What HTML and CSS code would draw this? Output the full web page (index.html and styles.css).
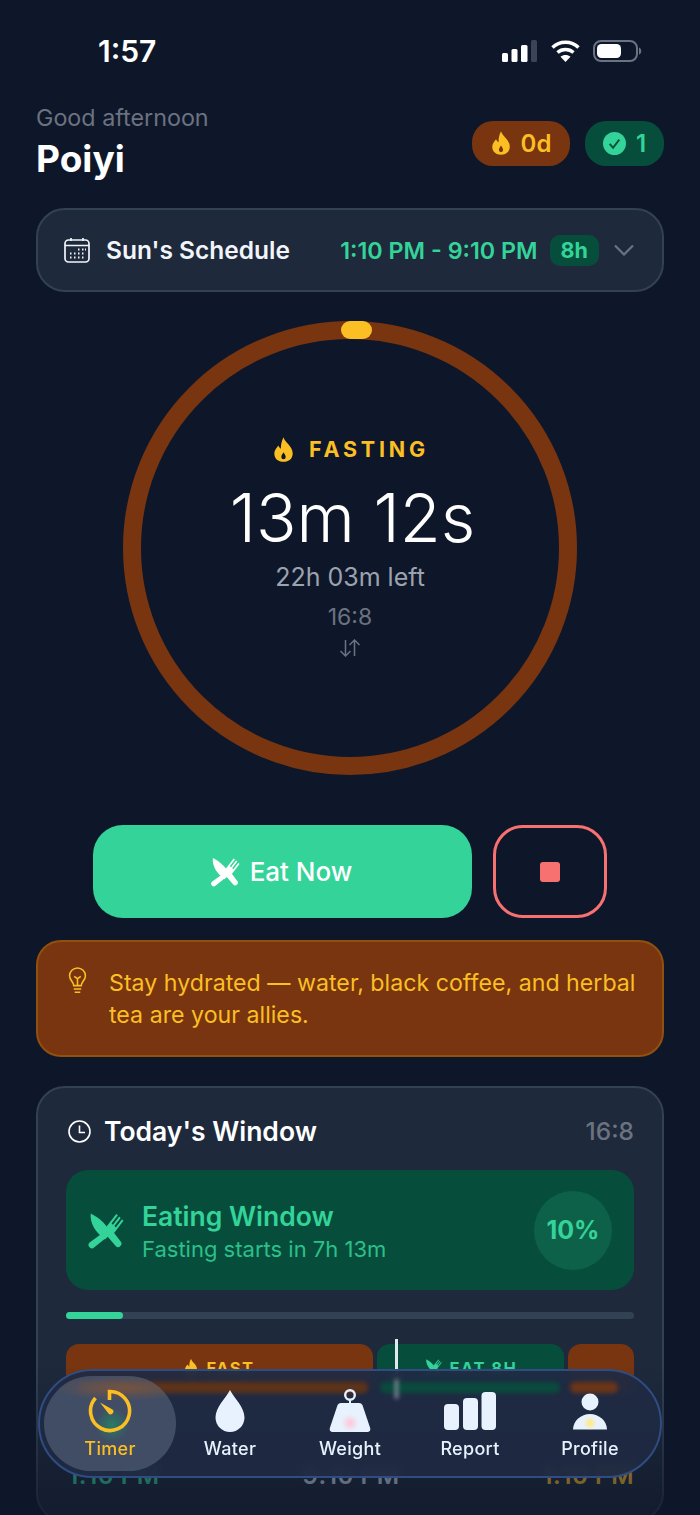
FILE: index.html
```html
<!DOCTYPE html>
<html>
    <head>
        <meta charset="utf-8">
        <title>Timer</title>
        <link rel="stylesheet" href="styles.css">
    </head>
    <body>
        <svg class="defs" width="0" height="0">
            <defs>
                <radialGradient id="glow-pink">
                    <stop offset="0" stop-color="#ffc6d8"/>
                    <stop offset="1" stop-color="#ffc6d8" stop-opacity="0"/>
                </radialGradient>
                <radialGradient id="glow-yellow">
                    <stop offset="0.2" stop-color="#fdeb8f"/>
                    <stop offset="1" stop-color="#fdeb8f" stop-opacity="0"/>
                </radialGradient>
                <path id="flame" fill-rule="evenodd" d="M12 1C13.500 7 22.500 11 22.500 19.500 22.500 25.500 18 29 12 29 6 29 1.500 25.500 1.500 19.500 1.500 15.500 4.500 13 6 10.500 7 12.500 8 13.500 9 14 9 9 10 5 12 1ZM12 18C10.500 20.500 9.500 21.500 9.500 23.500A2.500 2.500 0 0 0 14.500 23.500C14.500 21.500 13.500 20.500 12 18Z"/>
                <g id="cutlery">
                    <path d="M4 2C12 6 18 12 21 19L16 24C8 18 3 10 4 2Z"/>
                    <path d="M16.500 19.500 21 15 29 25.500A2.600 2.600 0 0 1 25 29.500Z"/>
                    <path d="M13.500 19 17 22.500 7 30.500A2.600 2.600 0 0 1 3 26.500Z"/>
                    <path d="M17 13.500 25.500 2.500 26.800 3.600 21.500 10.500 22.700 11.600 28 4.700 29.200 5.800 23.900 12.700 25.100 13.800 30.400 7 31.500 8.200 24 18C22 19.800 20 19.800 18.500 18.500 17 17.200 16.500 15.500 17 13.500Z"/>
                </g>
            </defs>
        </svg>

        <div class="screen">
            <div class="status">
                <span class="clock">1:57</span>
                <div class="status-icons">
                    <svg width="35" height="22" viewBox="0 0 35 22">
                        <rect x="0" y="13" width="6" height="9" rx="1.500" fill="#fff"/>
                        <rect x="9.500" y="9" width="6" height="13" rx="1.500" fill="#fff"/>
                        <rect x="19" y="5" width="6.500" height="17" rx="1.500" fill="#fff"/>
                        <rect x="29" y="0" width="6" height="22" rx="1.500" fill="#3b4557"/>
                    </svg>
                    <svg width="29" height="22" viewBox="0 0 29 22" fill="none" stroke="#fff" stroke-width="3.400">
                        <path d="M1.500 7.500C8.500 0.500 20.500 0.500 27.500 7.500"/>
                        <path d="M6.500 12.500C11 8.500 18 8.500 22.500 12.500"/>
                        <path d="M14.500 22 9.500 16.800C12.500 14.500 16.500 14.500 19.500 16.800Z" fill="#fff" stroke="none"/>
                    </svg>
                    <svg width="49" height="22" viewBox="0 0 49 22">
                        <rect x="1" y="1" width="43" height="20" rx="7" fill="none" stroke="#6b7280" stroke-width="2"/>
                        <rect x="4" y="4" width="24" height="14" rx="4.500" fill="#fff"/>
                        <path d="M46 7.500C49 8.500 49 13.500 46 14.500Z" fill="#6b7280"/>
                    </svg>
                </div>
            </div>

            <div class="header">
                <div>
                    <div class="greeting">Good afternoon</div>
                    <div class="name">Poiyi</div>
                </div>
                <div class="pills">
                    <div class="pill pill-fast">
                        <svg width="20" height="26" viewBox="0 0 24 30" fill="#fbbf24"><use href="#flame"/></svg>
                        0d
                    </div>
                    <div class="pill pill-done">
                        <svg width="23" height="23" viewBox="0 0 24 24">
                            <circle cx="12" cy="12" r="12" fill="#34d399"/>
                            <path d="M7 12.500 10.500 16.500 17 8" fill="none" stroke="#064e3b" stroke-width="2"/>
                        </svg>
                        1
                    </div>
                </div>
            </div>

            <div class="schedule">
                <svg width="26" height="26" viewBox="0 0 26 26" fill="none" stroke="#f1f5f9" stroke-width="1.700">
                    <rect x="1" y="3" width="24" height="22" rx="3.500"/>
                    <path d="M1 8.500H25M7 1V4M19 1V4"/>
                    <path d="M14 12.500h1.500M18 12.500h1.500M21 12.500h1M6 16.500h1.500M10 16.500h1.500M14 16.500h1.500M18 16.500h1.500M6 20.500h1.500M10 20.500h1.500M14 20.500h1.500M18 20.500h1.500" stroke-width="2"/>
                </svg>
                <span class="schedule-name">Sun's Schedule</span>
                <span class="schedule-time">1:10 PM - 9:10 PM</span>
                <span class="schedule-chip">8h</span>
                <svg class="chevron" width="22" height="12" viewBox="0 0 22 12" fill="none" stroke="#6b7280" stroke-width="2.200"><path d="M2 1.500 11 10.500 20 1.500"/></svg>
            </div>

            <div class="ring">
                <svg width="454" height="454" viewBox="0 0 454 454">
                    <circle cx="227" cy="227" r="218" fill="none" stroke="#78350f" stroke-width="18"/>
                    <rect x="218" y="0" width="31" height="18" rx="9" fill="#fbbf24"/>
                </svg>
                <div class="ring-text">
                    <div class="phase">
                        <svg width="21" height="27" viewBox="0 0 24 30" fill="#fbbf24"><use href="#flame"/></svg>
                        <span>FASTING</span>
                    </div>
                    <div class="elapsed">13m 12s</div>
                    <div class="left">22h 03m left</div>
                    <div class="ratio">16:8</div>
                    <svg class="swap" width="22" height="18" viewBox="0 0 22 18" fill="none" stroke="#6b7280" stroke-width="1.500">
                        <path d="M6.500 1V17M1.500 12 6.500 17 11.500 12M15.500 17V1M10.500 6 15.500 1 20.500 6"/>
                    </svg>
                </div>
            </div>

            <div class="actions">
                <div class="eat-btn">
                    <svg width="31" height="31" viewBox="0 0 32 32" fill="#fff"><use href="#cutlery"/></svg>
                    Eat Now
                </div>
                <div class="stop-btn"><div class="stop-square"></div></div>
            </div>

            <div class="tip">
                <svg width="19" height="28" viewBox="0 0 20 30" fill="none" stroke="#fbbf24" stroke-width="1.700">
                    <path d="M6 20C6 16 1.500 14.500 1.500 9.500A8.500 8.500 0 0 1 18.500 9.500C18.500 14.500 14 16 14 20Z"/>
                    <path d="M6.500 10 10 12.500 13.500 10M10 12.500V20M6 23.500H14M7 27H13"/>
                </svg>
                <p>Stay hydrated — water, black coffee, and herbal tea are your allies.</p>
            </div>

            <div class="card">
                <div class="card-head">
                    <svg width="23" height="23" viewBox="0 0 23 23" fill="none" stroke="#fff" stroke-width="1.600">
                        <circle cx="11.500" cy="11.500" r="10.500"/>
                        <path d="M11.500 5.500V12.500H17"/>
                    </svg>
                    <span class="card-title">Today's Window</span>
                    <span class="card-ratio">16:8</span>
                </div>

                <div class="window">
                    <svg width="38" height="38" viewBox="0 0 32 32" fill="#34d399"><use href="#cutlery"/></svg>
                    <div class="window-text">
                        <div class="window-title">Eating Window</div>
                        <div class="window-sub">Fasting starts in 7h 13m</div>
                    </div>
                    <div class="window-pct">10%</div>
                </div>

                <div class="progress"><div class="progress-fill" style="width: 10%"></div></div>

                <div class="timeline">
                    <div class="seg seg-fast seg-a">
                        <svg width="14" height="18" viewBox="0 0 24 30" fill="#fbbf24"><use href="#flame"/></svg>
                        FAST
                    </div>
                    <div class="seg seg-eat seg-b">
                        <svg width="18" height="18" viewBox="0 0 32 32" fill="#34d399"><use href="#cutlery"/></svg>
                        EAT 8H
                    </div>
                    <div class="seg seg-fast seg-c"></div>
                    <div class="now-mark"></div>
                </div>

                <div class="times">
                    <div class="time-val time-green">1:10 PM</div>
                    <div class="time-val time-gray">9:10 PM</div>
                    <div class="time-val time-amber">1:10 PM</div>
                </div>
            </div>

            <div class="fade"></div>

            <div class="nav">
                <div class="smear smear-a"></div>
                <div class="smear smear-b"></div>
                <div class="smear smear-c"></div>
                <div class="smear smear-mark"></div>
                <div class="nav-item nav-active">
                    <div class="nav-icon">
                        <svg width="46" height="46" viewBox="0 0 46 46" fill="none" stroke="#fbbf24" stroke-width="3.600">
                            <path d="M22.500 12V3.500A19.500 19.500 0 1 1 8.500 10"/>
                            <path d="M13 14.500 25.500 21.500A2.800 2.800 0 0 1 21.500 25.500Z" fill="#fbbf24" stroke="none"/>
                        </svg>
                    </div>
                    <span>Timer</span>
                </div>
                <div class="nav-item">
                    <div class="nav-icon">
                        <svg width="30" height="42" viewBox="0 0 30 42" fill="#e8f2ff">
                            <path d="M15 0C19 8 29.500 17 29.500 27.500A14.500 14.500 0 0 1 0.500 27.500C0.500 17 11 8 15 0Z"/>
                        </svg>
                    </div>
                    <span>Water</span>
                </div>
                <div class="nav-item">
                    <div class="nav-icon">
                        <svg width="44" height="44" viewBox="0 0 44 44" fill="#e8f2ff">
                            <circle cx="22" cy="6" r="4.800" fill="none" stroke="#e8f2ff" stroke-width="2.400"/>
                            <path d="M21 10H23V15H21Z"/>
                            <path d="M13 14H31C33 14 34 15 34.600 16.500L42 38.500C43 41.500 41.500 43 39 43H5C2.500 43 1 41.500 2 38.500L9.400 16.500C10 15 11 14 13 14Z"/>
                            <circle cx="22" cy="34" r="9" fill="url(#glow-pink)"/>
                        </svg>
                    </div>
                    <span>Weight</span>
                </div>
                <div class="nav-item">
                    <div class="nav-icon">
                        <svg width="52" height="38" viewBox="0 0 52 38" fill="#e8f2ff">
                            <rect x="0" y="12" width="15" height="26" rx="4"/>
                            <rect x="19" y="6" width="15" height="32" rx="4"/>
                            <rect x="37.500" y="0" width="14.500" height="38" rx="4"/>
                        </svg>
                    </div>
                    <span>Report</span>
                </div>
                <div class="nav-item">
                    <div class="nav-icon">
                        <svg width="36" height="37" viewBox="0 0 36 37" fill="#e8f2ff">
                            <circle cx="18" cy="9" r="8.500"/>
                            <path d="M1 36.500C1 28 9 21 18 21 27 21 35 28 35 36.500Z"/>
                            <circle cx="18" cy="30" r="7" fill="url(#glow-yellow)"/>
                        </svg>
                    </div>
                    <span>Profile</span>
                </div>
            </div>
        </div>
    </body>
</html>
```

FILE: styles.css
```css
* {
    box-sizing: border-box;
}

body {
    margin: 0;
    background: #0e172a;
    font-family: Inter, "Noto Sans", sans-serif;
}

.defs {
    display: block;
    height: 0;
}

.screen {
    position: relative;
    height: 1515px;
    overflow: hidden;
    padding-top: 40px;
    background: #0e172a;
    color: #fff;
}

/* status bar */
.status {
    display: flex;
    justify-content: space-between;
    align-items: center;
    height: 22px;
    padding: 0 58px 0 98px;
}

.clock {
    font-size: 30px;
    font-weight: 600;
}

.status-icons {
    display: flex;
    align-items: center;
    gap: 13.500px;
}

/* header */
.header {
    display: flex;
    justify-content: space-between;
    align-items: center;
    margin-top: 40px;
    padding: 0 36px;
}

.greeting {
    font-size: 23.300px;
    line-height: 32px;
    color: #6b7280;
}

.name {
    font-size: 37px;
    line-height: 50px;
    font-weight: 700;
}

.pills {
    display: flex;
    gap: 15px;
}

.pill {
    display: flex;
    align-items: center;
    justify-content: center;
    gap: 10px;
    height: 45px;
    border-radius: 21px;
    font-size: 24px;
    font-weight: 600;
}

.pill-fast {
    width: 98px;
    background: #78350f;
    color: #fbbf24;
}

.pill-done {
    width: 79px;
    background: #064e3b;
    color: #34d399;
}

/* schedule */
.schedule {
    display: flex;
    align-items: center;
    height: 84px;
    margin: 24px 36px 0;
    padding: 0 27px 0 26px;
    background: #1e293b;
    border: 2px solid #334155;
    border-radius: 29px;
}

.schedule-name {
    margin-left: 16px;
    font-size: 24.500px;
    font-weight: 600;
    color: #f1f5f9;
}

.schedule-time {
    margin-left: auto;
    font-size: 23.300px;
    font-weight: 600;
    color: #34d399;
}

.schedule-chip {
    margin-left: 12px;
    padding: 0 11px;
    height: 31px;
    line-height: 31px;
    border-radius: 10px;
    background: #064e3b;
    color: #34d399;
    font-size: 21.500px;
    font-weight: 700;
}

.chevron {
    margin-left: 14px;
}

/* ring */
.ring {
    display: grid;
    place-items: center;
    width: 454px;
    height: 454px;
    margin: 29px auto 0;
}

.ring > * {
    grid-area: 1 / 1;
}

.ring-text {
    display: flex;
    flex-direction: column;
    align-items: center;
    padding-bottom: 4px;
}

.phase {
    display: flex;
    align-items: center;
    gap: 15px;
    margin-left: 2px;
    font-size: 21.500px;
    font-weight: 700;
    letter-spacing: 3.800px;
    color: #fbbf24;
}

.elapsed {
    margin: 16px 0 0 5px;
    font-size: 66.800px;
    line-height: 78px;
    font-weight: 300;
}

.left {
    margin-top: 2px;
    font-size: 25px;
    line-height: 36px;
    font-weight: 400;
    color: #9ca3af;
}

.ratio {
    margin-top: 7px;
    font-size: 23px;
    line-height: 30px;
    color: #6b7280;
}

.swap {
    margin-top: 7px;
}

/* actions */
.actions {
    display: flex;
    justify-content: center;
    gap: 21px;
    margin-top: 50px;
}

.eat-btn {
    display: flex;
    align-items: center;
    justify-content: center;
    gap: 10px;
    width: 379px;
    height: 93px;
    padding-right: 4px;
    border-radius: 30px;
    background: #34d399;
    font-size: 26px;
    font-weight: 500;
}

.stop-btn {
    display: flex;
    align-items: center;
    justify-content: center;
    width: 114px;
    height: 93px;
    border: 3.500px solid #f87171;
    border-radius: 30px;
}

.stop-square {
    width: 20px;
    height: 20px;
    border-radius: 3px;
    background: #f87171;
}

/* tip */
.tip {
    display: flex;
    gap: 22px;
    height: 117px;
    margin: 22px 36px 0;
    padding: 25px 14px 0 30px;
    background: #78350f;
    border: 2px solid #92500f;
    border-radius: 25px;
}

.tip svg {
    flex: none;
}

.tip p {
    margin: 0;
    font-size: 23.200px;
    line-height: 32px;
    color: #fbbf24;
}

/* today card */
.card {
    height: 436px;
    margin: 29px 36px 0;
    padding: 25px 28px 0;
    background: #1e293b;
    border: 2px solid #334155;
    border-radius: 29px;
}

.card-head {
    display: flex;
    align-items: center;
    height: 36px;
    padding-left: 2px;
}

.card-title {
    margin-left: 13px;
    font-size: 26.500px;
    font-weight: 600;
}

.card-ratio {
    margin-left: auto;
    font-size: 24.500px;
    font-weight: 500;
    color: #6b7280;
}

.window {
    display: flex;
    align-items: center;
    height: 120px;
    margin-top: 21px;
    padding: 0 22px 0 20px;
    background: #064e3b;
    border-radius: 22px;
}

.window-text {
    margin: 4px 0 0 18px;
}

.window-title {
    font-size: 26.500px;
    line-height: 34px;
    font-weight: 600;
    color: #34d399;
}

.window-sub {
    font-size: 22px;
    line-height: 32px;
    color: #34d399;
    opacity: 0.85;
}

.window-pct {
    display: flex;
    align-items: center;
    justify-content: center;
    width: 78px;
    height: 79px;
    margin-left: auto;
    border-radius: 50%;
    background: rgba(52, 211, 153, 0.15);
    color: #34d399;
    font-size: 25px;
    font-weight: 700;
}

.progress {
    height: 7px;
    margin-top: 22px;
    border-radius: 4px;
    background: #334155;
}

.progress-fill {
    height: 100%;
    border-radius: 4px;
    background: #34d399;
}

.timeline {
    position: relative;
    display: flex;
    gap: 4px;
    height: 50px;
    margin-top: 25px;
}

.seg {
    display: flex;
    justify-content: center;
    gap: 8px;
    padding-top: 14px;
    border-radius: 13px;
    font-size: 16.500px;
    font-weight: 700;
    letter-spacing: 1.500px;
}

.seg-fast {
    background: #78350f;
    color: #fbbf24;
}

.seg-eat {
    background: #064e3b;
    color: #34d399;
}

.seg-a {
    width: 307px;
}

.seg-b {
    width: 187px;
}

.seg-c {
    width: 66px;
}

.now-mark {
    position: absolute;
    left: 329px;
    top: -5px;
    width: 3px;
    height: 60px;
    background: #e2e8f0;
}

.times {
    display: flex;
    justify-content: space-between;
    margin-top: 68px;
    padding-left: 2px;
}

.time-val {
    font-size: 24.200px;
    line-height: 28px;
    font-weight: 600;
    letter-spacing: 0.500px;
}

.time-green {
    color: #34d399;
}

.time-gray {
    color: #cbd5e1;
}

.time-amber {
    color: #fbbf24;
}

/* bottom fade behind the tab bar */
.fade {
    position: absolute;
    left: 0;
    right: 0;
    bottom: 0;
    height: 150px;
    background: linear-gradient(rgba(14, 23, 42, 0), rgba(14, 23, 42, 0.7));
}

/* tab bar */
.nav {
    position: absolute;
    left: 38px;
    top: 1369px;
    display: flex;
    width: 624px;
    height: 109px;
    padding: 5px 10px 0;
    overflow: hidden;
    background: rgba(31, 42, 67, 0.93);
    backdrop-filter: blur(4px);
    border: 2px solid #2f4d82;
    border-radius: 55px;
}

.nav-item {
    position: relative;
    display: flex;
    flex-direction: column;
    align-items: center;
    width: 120px;
    height: 95px;
    padding-top: 12px;
    font-size: 18px;
    line-height: 22px;
    font-weight: 500;
    letter-spacing: 0.300px;
    color: #e8f2ff;
}

.nav-icon {
    display: flex;
    align-items: center;
    justify-content: center;
    height: 46px;
    margin-bottom: 4px;
}

.nav-active {
    width: 132px;
    margin: 0 -6px;
    border-radius: 48px;
    background:
        radial-gradient(ellipse 70px 13px at 80px 12px, rgba(150, 85, 40, 0.55), transparent),
        radial-gradient(circle 17px at 68px 49px, rgba(30, 140, 100, 0.75), transparent),
        rgba(74, 87, 111, 0.8);
    color: #fbbf24;
}

.smear {
    position: absolute;
    top: 11px;
    height: 11px;
    border-radius: 6px;
    filter: blur(2px);
}

.smear-a {
    left: 40px;
    width: 288px;
    background: #5d3319;
}

.smear-b {
    left: 340px;
    width: 180px;
    background: #0b4a3e;
}

.smear-c {
    left: 530px;
    width: 48px;
    background: #6b3518;
}

.smear-mark {
    left: 355px;
    top: 8px;
    width: 3px;
    height: 20px;
    background: #8d97a6;
}
```
